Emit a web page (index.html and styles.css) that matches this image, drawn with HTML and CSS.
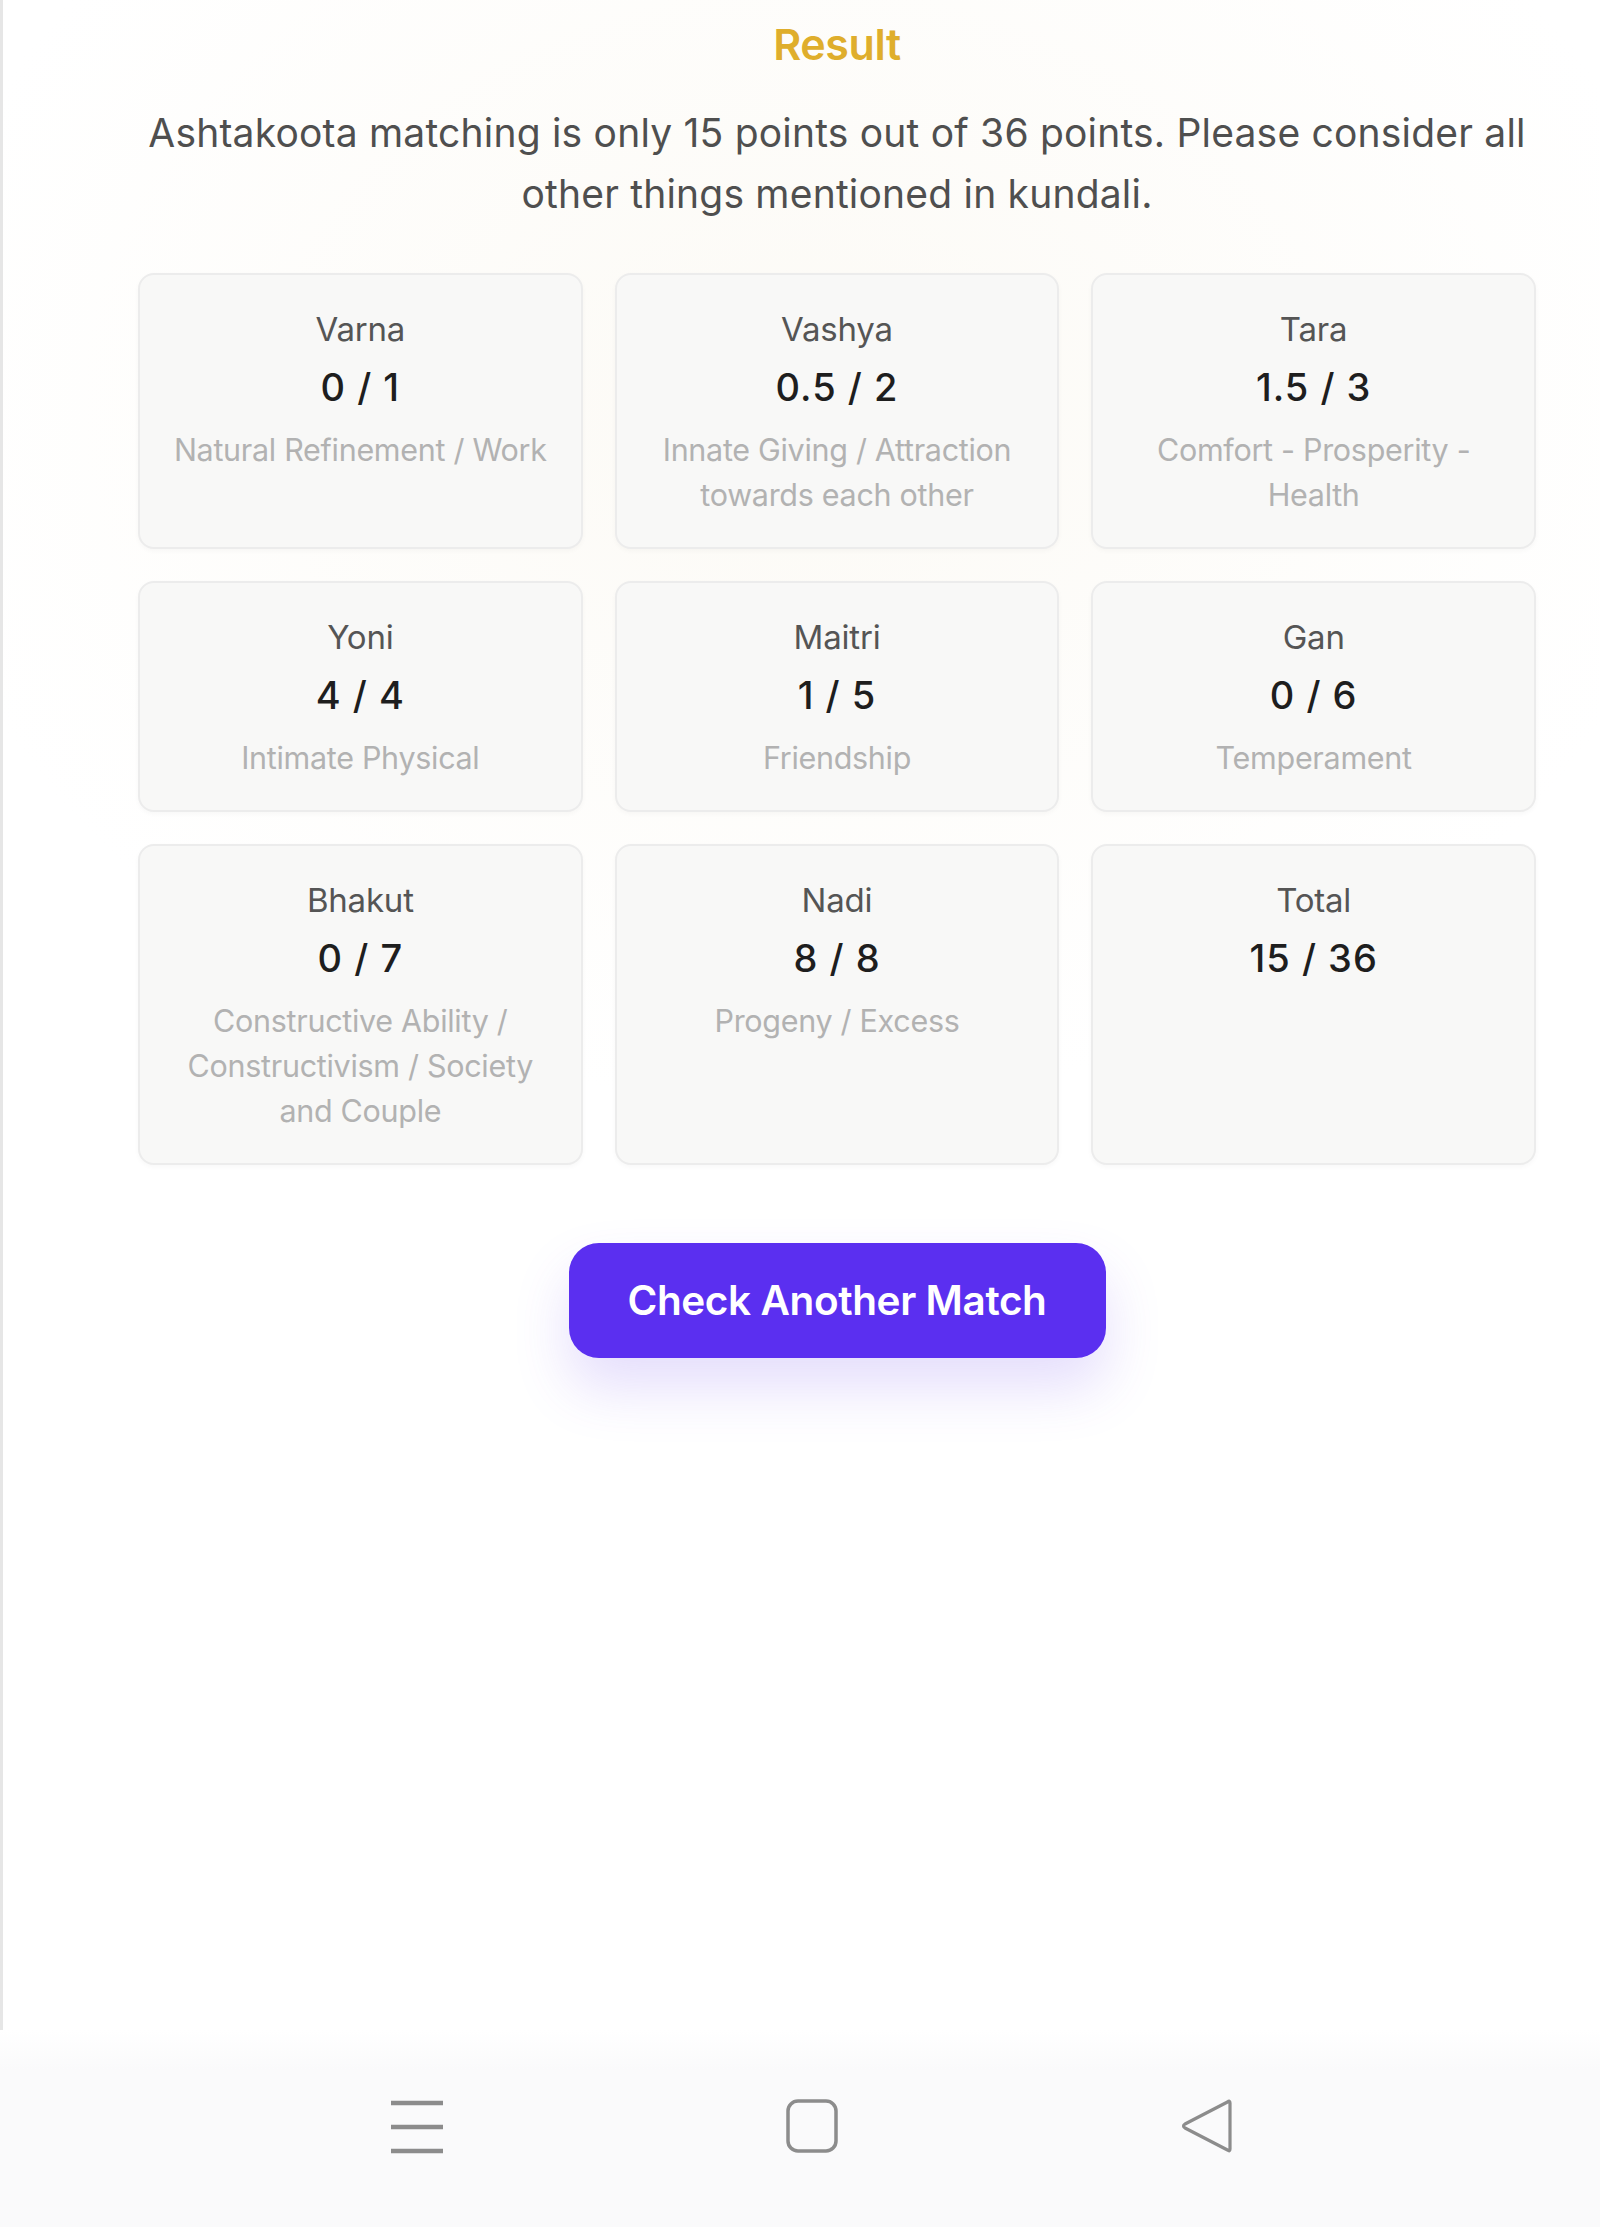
FILE: index.html
```html
<!DOCTYPE html>
<html lang="en">
<head>
<meta charset="utf-8">
<title>Result</title>
<link rel="stylesheet" href="styles.css">
</head>
<body>
<div class="screen">
  <main class="main">
    <h1 class="title">Result</h1>
    <p class="summary">Ashtakoota matching is only 15 points out of 36 points. Please consider all<br>other things mentioned in kundali.</p>

    <section class="grid">
      <div class="card">
        <div class="card-name">Varna</div>
        <div class="card-score">0 / 1</div>
        <div class="card-desc">Natural Refinement / Work</div>
      </div>
      <div class="card">
        <div class="card-name">Vashya</div>
        <div class="card-score">0.5 / 2</div>
        <div class="card-desc">Innate Giving / Attraction towards each other</div>
      </div>
      <div class="card">
        <div class="card-name">Tara</div>
        <div class="card-score">1.5 / 3</div>
        <div class="card-desc">Comfort - Prosperity - Health</div>
      </div>
      <div class="card">
        <div class="card-name">Yoni</div>
        <div class="card-score">4 / 4</div>
        <div class="card-desc">Intimate Physical</div>
      </div>
      <div class="card">
        <div class="card-name">Maitri</div>
        <div class="card-score">1 / 5</div>
        <div class="card-desc">Friendship</div>
      </div>
      <div class="card">
        <div class="card-name">Gan</div>
        <div class="card-score">0 / 6</div>
        <div class="card-desc">Temperament</div>
      </div>
      <div class="card">
        <div class="card-name">Bhakut</div>
        <div class="card-score">0 / 7</div>
        <div class="card-desc">Constructive Ability / Constructivism / Society and Couple</div>
      </div>
      <div class="card">
        <div class="card-name">Nadi</div>
        <div class="card-score">8 / 8</div>
        <div class="card-desc">Progeny / Excess</div>
      </div>
      <div class="card">
        <div class="card-name">Total</div>
        <div class="card-score">15 / 36</div>
      </div>
    </section>

    <div class="actions">
      <button class="btn" type="button">Check Another Match</button>
    </div>
  </main>

  <nav class="navbar">
    <svg class="nav-icon" width="54" height="56" viewBox="0 0 54 56" aria-label="Menu">
      <g stroke="#8c8c8c" stroke-width="4.5" stroke-linecap="butt">
        <line x1="1" y1="5" x2="53" y2="5"/>
        <line x1="1" y1="29" x2="53" y2="29"/>
        <line x1="1" y1="53" x2="53" y2="53"/>
      </g>
    </svg>
    <svg class="nav-icon" width="52" height="54" viewBox="0 0 52 54" aria-label="Home">
      <rect x="2" y="2" width="48" height="50" rx="10" ry="10" fill="none" stroke="#8c8c8c" stroke-width="3.5"/>
    </svg>
    <svg class="nav-icon" width="54" height="56" viewBox="0 0 54 56" aria-label="Back">
      <path d="M50 5 L50 51 Q50 54 47.5 52 L5 30 Q2 28 5 26 L47.5 4 Q50 2 50 5 Z" fill="none" stroke="#8c8c8c" stroke-width="3.2" stroke-linejoin="round"/>
    </svg>
  </nav>
</div>
</body>
</html>
```

FILE: styles.css
```css
* {
  box-sizing: border-box;
}

html, body {
  margin: 0;
  padding: 0;
}

body {
  width: 1600px;
  height: 2227px;
  font-family: "Inter", "Noto Sans", "Liberation Sans", sans-serif;
  background: #ffffff;
  overflow: hidden;
}

.screen {
  display: flex;
  flex-direction: column;
  height: 2227px;
}

.main {
  flex: 1;
  border-left: 3px solid #e6e6e6;
  padding: 16px 64px 0 135px;
  background:
    radial-gradient(ellipse 900px 700px at 50% 20%, #fcfaf5 0%, rgba(252, 250, 245, 0) 100%),
    #ffffff;
}

.title {
  margin: 0;
  text-align: center;
  font-size: 43px;
  line-height: 56px;
  font-weight: 600;
  color: #dfae2c;
  letter-spacing: -0.4px;
}

.summary {
  margin: 30px -40px 0;
  text-align: center;
  font-size: 39px;
  line-height: 61px;
  font-weight: 400;
  color: #4f4f4f;
  letter-spacing: 0.2px;
}

.grid {
  margin-top: 49px;
  display: grid;
  grid-template-columns: repeat(3, 1fr);
  gap: 32px;
}

.card {
  background: #f8f8f7;
  border: 2px solid #ececec;
  border-radius: 16px;
  box-shadow: 0 2px 5px rgba(0, 0, 0, 0.03);
  padding: 32px 26px 30px;
  text-align: center;
}

.card-name {
  font-size: 33px;
  line-height: 44px;
  color: #555555;
  letter-spacing: -0.2px;
}

.card-score {
  margin-top: 12px;
  font-size: 38px;
  line-height: 48px;
  font-weight: 500;
  color: #1e1e1e;
  letter-spacing: 1px;
}

.card-desc {
  margin-top: 16px;
  font-size: 30.5px;
  line-height: 45px;
  color: #b2b2b2;
  letter-spacing: -0.3px;
}

.actions {
  display: flex;
  justify-content: center;
  margin-top: 78px;
}

.btn {
  width: 537px;
  height: 115px;
  border: none;
  border-radius: 30px;
  background: #5b2ff0;
  color: #ffffff;
  font-family: "Inter", "Noto Sans", "Liberation Sans", sans-serif;
  font-size: 40.5px;
  font-weight: 600;
  letter-spacing: -0.4px;
  box-shadow: 0 30px 55px rgba(110, 70, 240, 0.18);
}

.navbar {
  height: 197px;
  background: linear-gradient(#ffffff 0px, #fafafb 40px, #fafafb 100%);
  display: flex;
  justify-content: center;
  align-items: center;
  gap: 342px;
  padding-left: 24px;
  padding-bottom: 6px;
}

.nav-icon {
  display: block;
}
```
